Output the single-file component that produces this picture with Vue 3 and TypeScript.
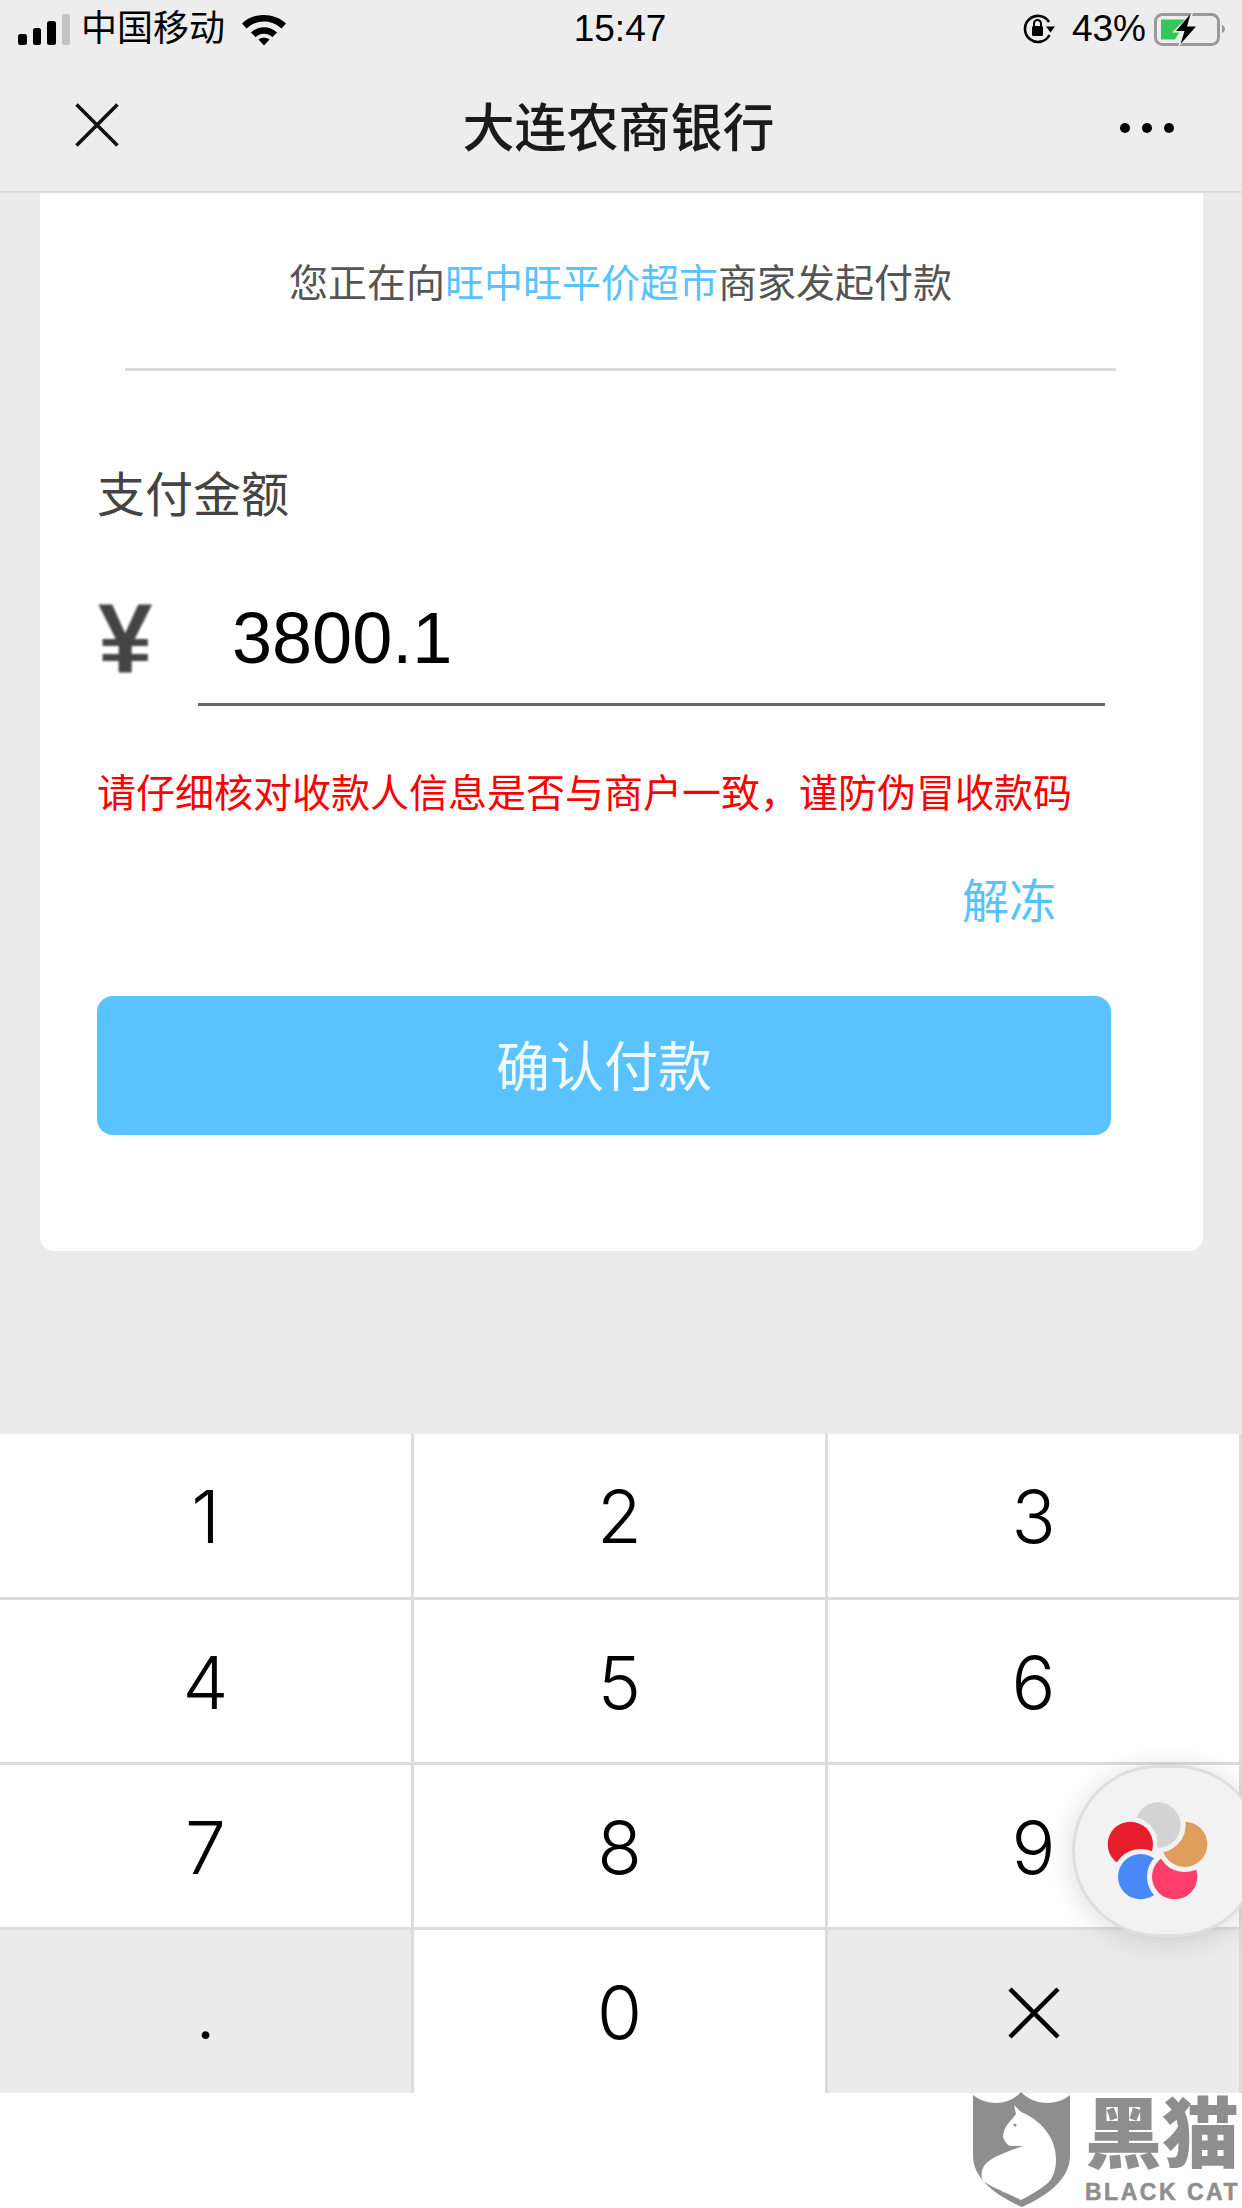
<script setup lang="ts">
const keys: string[] = ['1', '2', '3', '4', '5', '6', '7', '8', '9', '.', '0', 'del'];
const bars: number[] = [11, 17, 24, 31];
</script>

<template>
  <div class="page">
    <header class="top">
      <div class="status">
        <div class="status__left">
          <div class="signal">
            <i v-for="(h, n) in bars" :key="h" :class="{ off: n === 3 }" :style="{ height: h + 'px' }"></i>
          </div>
          <span class="carrier">中国移动</span>
          <svg class="wifi" width="46" height="34" viewBox="0 0 46 34">
            <path d="M1 11.500C13 0 33 0 45 11.500L40.500 16.500C30.500 7 15.500 7 5.500 16.500Z" />
            <path d="M10 20.500C17.500 13.500 28.500 13.500 36 20.500L31.500 25C26.500 20.500 19.500 20.500 14.500 25Z" />
            <path d="M17.500 27.500C20.500 25 25.500 25 28.500 27.500L23 33.500Z" />
          </svg>
        </div>
        <span class="clock">15:47</span>
        <div class="status__right">
          <svg class="lock" width="32" height="30" viewBox="0 0 32 30">
            <path d="M26.500 21A13 13 0 1 1 26 8" fill="none" stroke="#000" stroke-width="2.600" />
            <path d="M23 12.500L32 12.500L27.500 18.500Z" />
            <rect x="9" y="12" width="11" height="10" rx="1.500" />
            <path d="M11 13V9.500a3.500 3.500 0 0 1 7 0V13" fill="none" stroke="#000" stroke-width="2" />
          </svg>
          <span class="percent">43%</span>
          <svg class="battery" width="74" height="36" viewBox="0 0 74 36">
            <rect x="2.500" y="3.500" width="63" height="30" rx="7" fill="none" stroke="#999" stroke-width="3" />
            <path d="M8 8.500H34L22 28.500H8Z" fill="#34c85a" />
            <path d="M69 14C71 15 72 16.500 72 18C72 19.500 71 21 69 22Z" fill="#999" />
            <path d="M41 0L19 21.500H29L25 36L47 15.500H35Z" fill="#ededed" />
            <path d="M37.500 3L23 20H31.500L27.500 33L43 15.500H34Z" />
          </svg>
        </div>
      </div>
      <nav class="nav">
        <svg class="nav__close" width="44" height="44" viewBox="0 0 44 44">
          <path d="M1.500 1.500L42.500 42.500M42.500 1.500L1.500 42.500" stroke="#111" stroke-width="3.600" fill="none" />
        </svg>
        <h1 class="nav__title">大连农商银行</h1>
        <div class="nav__more"><i></i><i></i><i></i></div>
      </nav>
    </header>

    <main class="main">
      <section class="card">
        <p class="notice">您正在向<span class="accent">旺中旺平价超市</span>商家发起付款</p>
        <label class="amount-label">支付金额</label>
        <div class="amount">
          <span class="amount__sign">¥</span>
          <div class="amount__value">3800.1</div>
        </div>
        <p class="warning">请仔细核对收款人信息是否与商户一致，谨防伪冒收款码</p>
        <div class="thaw">解冻</div>
        <button class="pay">确认付款</button>
      </section>
    </main>

    <section class="keypad">
      <div v-for="k in keys" :key="k" class="key" :class="{ 'key--grey': k === '.' || k === 'del' }">
        <svg v-if="k === 'del'" width="52" height="52" viewBox="0 0 52 52">
          <path d="M2 2L50 50M50 2L2 50" stroke="#000" stroke-width="4.500" fill="none" />
        </svg>
        <template v-else>{{ k }}</template>
      </div>
    </section>

    <div class="footer"></div>

    <div class="float">
      <svg width="104" height="100" viewBox="260 235 310 300">
        <defs>
          <clipPath id="right-side"><rect x="412" y="200" width="200" height="200" /></clipPath>
        </defs>
        <g stroke="#f2f2f2" stroke-width="30" paint-order="stroke">
          <circle cx="415" cy="307" r="68" fill="#d3d3d3" />
          <circle cx="332" cy="365" r="68" fill="#e61d2b" />
          <circle cx="363" cy="462" r="68" fill="#4a87f7" />
          <circle cx="465" cy="462" r="68" fill="#ff3d68" />
          <circle cx="495" cy="365" r="68" fill="#df9d5e" />
          <circle cx="415" cy="307" r="68" fill="#d3d3d3" clip-path="url(#right-side)" />
        </g>
      </svg>
    </div>

    <div class="mark">
      <svg class="mark__shield" width="98" height="115" viewBox="0 0 98 115">
        <path d="M0 3C14 14 36 14 48 0C61 14 84 14 97 3V64C97 86 76 103 49 115C22 103 0 86 0 64Z" fill="#8e8e8e" />
        <path d="M41 13L48 20C68 28 83 46 83 67C83 78 80 86 75 91C66 98 58 103 48 108C36 102 20 96 10 89C8 84 8 80 10 76C14 68 24 63 50 54L37 54C33 52 31 48 30 45C30 40 32 36 34 33C38 28 41 25 43 22Z" fill="#fefefe" />
        <circle cx="42" cy="33" r="1.500" fill="#8e8e8e" />
      </svg>
      <div class="mark__text">
        <span class="mark__cn">黑猫</span>
        <span class="mark__en">BLACK CAT</span>
      </div>
    </div>
  </div>
</template>

<style scoped>
.page {
  position: relative;
  width: 1242px;
  height: 2208px;
  overflow: hidden;
  background: #fefefe;
  display: flex;
  flex-direction: column;
  font-family: "Liberation Sans", "Noto Sans CJK SC", sans-serif;
}

.top {
  height: 193px;
  box-sizing: border-box;
  background: #ededed;
  border-bottom: 2px solid #dcdcdc;
  color: #000;
}

.status {
  height: 58px;
  display: grid;
  grid-template-columns: 1fr auto 1fr;
  align-items: center;
  padding: 0 15px 0 18px;
}

.status__left,
.status__right {
  display: flex;
  align-items: center;
}

.status__right {
  justify-content: flex-end;
}

.signal {
  display: flex;
  align-items: flex-end;
  gap: 6px;
  height: 31px;
}

.signal i {
  width: 8.500px;
  border-radius: 2.500px;
  background: #000;
}

.signal i.off {
  background: #c3c3c3;
}

.carrier {
  font-size: 36px;
  margin-left: 11px;
  line-height: 58px;
}

.wifi {
  margin-left: 16px;
}

.clock,
.percent {
  font-size: 37px;
  line-height: 58px;
}

.clock {
  margin-right: 5px;
}

.percent {
  margin-left: 17px;
  margin-right: 1px;
}

.battery {
  margin-left: 6px;
}

.lock {
  margin-left: -4px;
}

.nav {
  height: 133px;
  display: flex;
  align-items: center;
  justify-content: space-between;
  padding: 0 68px 18px 75px;
}

.nav__close {
  flex: none;
}

.nav__title {
  margin: 0 0 0 -2px;
  font-size: 52px;
  font-weight: 500;
  color: #1a1a1a;
}

.nav__more {
  display: flex;
  gap: 12px;
  margin-top: 6px;
}

.nav__more i {
  width: 10px;
  height: 10px;
  border-radius: 50%;
  background: #000;
}

.main {
  height: 1241px;
  background: #ebebeb;
  padding: 0 39px 0 40px;
  box-sizing: border-box;
}

.card {
  height: 1058px;
  box-sizing: border-box;
  background: #fff;
  border-radius: 0 0 14px 14px;
  padding-top: 64px;
  display: flex;
  flex-direction: column;
}

.notice {
  margin: 0 87px 0 85px;
  height: 114px;
  box-sizing: border-box;
  border-bottom: 3px solid #dcdcdc;
  text-align: center;
  font-size: 39px;
  line-height: 54px;
  color: #555;
}

.accent {
  color: #59c2ff;
}

.amount-label {
  margin: 92px 0 0 57px;
  font-size: 48px;
  line-height: 66px;
  color: #444;
}

.amount {
  display: flex;
  align-items: flex-start;
  margin: 67px 0 0 58px;
}

.amount__sign {
  width: 100px;
  font-size: 98px;
  font-weight: 700;
  line-height: 84px;
  color: #444;
  filter: blur(0.8px);
}

.amount__value {
  height: 107px;
  box-sizing: content-box;
  width: 873px;
  border-bottom: 3px solid #666;
  padding-left: 34px;
  font-size: 72px;
  line-height: 84px;
  color: #000;
}

.warning {
  margin: 60px 0 0 57px;
  font-size: 39px;
  line-height: 56px;
  color: #f00;
}

.thaw {
  margin: 52px 147px 0 0;
  align-self: flex-end;
  font-size: 47px;
  line-height: 56px;
  color: #59c2ff;
}

.pay {
  display: block;
  margin: 66px 0 0 57px;
  width: 1014px;
  height: 139px;
  padding: 0 0 5px;
  border: 0;
  border-radius: 16px;
  background: #59c2ff;
  color: #f0f9ff;
  font-family: inherit;
  font-size: 54px;
}

.keypad {
  height: 659px;
  display: grid;
  grid-template-columns: repeat(3, 414px);
  grid-template-rows: 166px 165px 165px 163px;
  background: #fff;
  font-family: Inter, "Liberation Sans", sans-serif;
  font-weight: 300;
}

.key {
  box-sizing: border-box;
  display: flex;
  align-items: center;
  justify-content: center;
  padding-top: 2px;
  border-right: 3px solid #dcdcdc;
  border-bottom: 3px solid #dcdcdc;
  font-size: 73px;
  color: #000;
}

.key--grey {
  background: #ebebeb;
}

.key:nth-last-child(-n + 3) {
  border-bottom: 0;
}

.footer {
  flex: 1;
  background: #fefefe;
}

.float {
  position: absolute;
  left: 1072px;
  top: 1765px;
  width: 190px;
  height: 172px;
  box-sizing: border-box;
  border: 3px solid #dedede;
  border-radius: 86px;
  background: #f2f2f2;
  box-shadow: 0 4px 30px rgba(0, 0, 0, 0.14);
  display: flex;
  align-items: center;
  padding: 0 0 0 31px;
}

.mark {
  position: absolute;
  left: 973px;
  top: 2092px;
  display: flex;
  gap: 14px;
  color: #8e8e8e;
}

.mark__text {
  display: flex;
  flex-direction: column;
  width: 156px;
  padding-top: 3px;
}

.mark__cn {
  font-size: 77px;
  line-height: 80px;
  font-weight: 900;
  white-space: nowrap;
}

.mark__en {
  margin-top: 4px;
  font-size: 23px;
  line-height: 26px;
  font-weight: 700;
  letter-spacing: 2.500px;
  white-space: nowrap;
  -webkit-text-stroke: 0.5px #8e8e8e;
}
</style>

<style>
html,
body {
  margin: 0;
  background: #fefefe;
}
</style>
